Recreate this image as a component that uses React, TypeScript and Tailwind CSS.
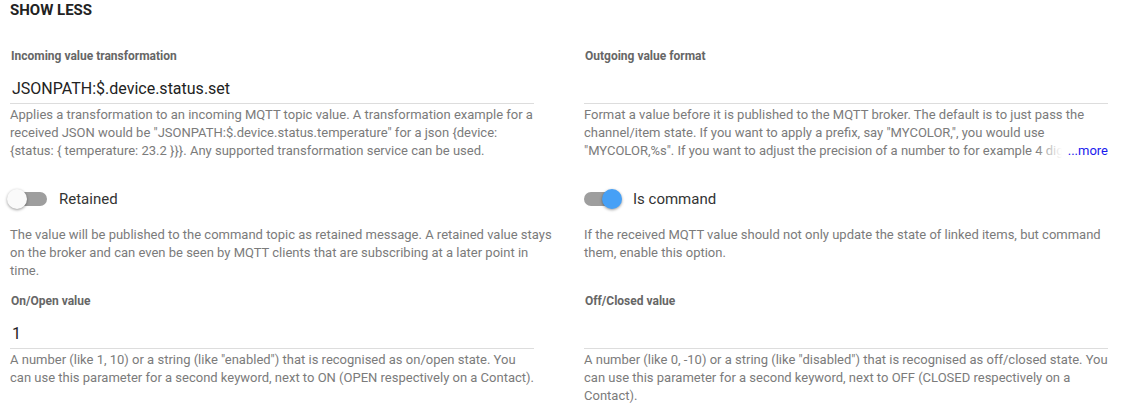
import { ReactNode } from "react";

const Label = ({ children }: { children: ReactNode }) => (
  <div className="text-[12px] leading-4 font-bold text-[#666] pl-px">{children}</div>
);

const Description = ({ children }: { children: ReactNode }) => (
  <p className="text-[13px] leading-[18px] text-[#7b7b7b]">{children}</p>
);

const TextField = ({
  label,
  value,
  children,
  clamp,
}: {
  label: string;
  value: string;
  children: ReactNode;
  clamp?: boolean;
}) => (
  <div className="w-[524px]">
    <Label>{label}</Label>
    <div className="mt-[10px] h-[30px] flex items-center pl-[2px] text-[16px] text-[#222] border-b border-[#ddd]">
      {value}
    </div>
    <div className="mt-[2px]">
      {clamp ? (
        <div className="relative h-[54px] overflow-hidden">
          <Description>{children}</Description>
          <div className="absolute right-0 bottom-0 flex h-[18px] items-center">
            <span className="w-[26px] h-full bg-gradient-to-r from-white/0 to-white" />
            <span className="bg-white pl-[6px] text-[13px] leading-[18px] text-[#1a1aee]">...more</span>
          </div>
        </div>
      ) : (
        <Description>{children}</Description>
      )}
    </div>
  </div>
);

const Toggle = ({ on, label, children }: { on: boolean; label: string; children: ReactNode }) => (
  <div>
    <div className="mt-[27px] h-6 flex items-center">
      <div className="relative w-[37px] h-[14px] rounded-full bg-[#9e9e9e]">
        <span
          className={`absolute top-[-3px] w-5 h-5 rounded-full shadow-[0_1px_3px_rgba(0,0,0,0.4)] ${
            on ? "right-[-1px] bg-[#46a0f6]" : "left-[-3px] bg-[#fafafa]"
          }`}
        />
      </div>
      <span className="ml-3 text-[15px] text-[#333]">{label}</span>
    </div>
    <div className="mt-[15px] w-[548px]">
      <Description>{children}</Description>
    </div>
  </div>
);

export default function App() {
  return (
    <div className="w-[1127px] h-[409px] overflow-hidden bg-white pl-[10px] font-['Roboto',sans-serif]">
      <div className="text-[15px] leading-5 font-bold text-[#222]">SHOW LESS</div>

      <div className="mt-[28px] grid grid-cols-[574px_1fr]">
        <TextField label="Incoming value transformation" value="JSONPATH:$.device.status.set">
          Applies a transformation to an incoming MQTT topic value. A transformation example for a
          received JSON would be "JSONPATH:$.device.status.temperature" for a json {"{device: {status: { temperature: 23.2 }}}"}. Any supported transformation service can be used.
        </TextField>
        <TextField label="Outgoing value format" value="" clamp>
          Format a value before it is published to the MQTT broker. The default is to just pass the
          channel/item state. If you want to apply a prefix, say "MYCOLOR,", you would use
          "MYCOLOR,%s". If you want to adjust the precision of a number to for example 4 digits, you
          would use "%.4f".
        </TextField>

        <Toggle on={false} label="Retained">
          The value will be published to the command topic as retained message. A retained value stays
          on the broker and can even be seen by MQTT clients that are subscribing at a later point in
          time.
        </Toggle>
        <Toggle on label="Is command">
          If the received MQTT value should not only update the state of linked items, but command
          them, enable this option.
        </Toggle>

        <div className="mt-[13px]">
          <TextField label="On/Open value" value="1">
            A number (like 1, 10) or a string (like "enabled") that is recognised as on/open state. You
            can use this parameter for a second keyword, next to ON (OPEN respectively on a Contact).
          </TextField>
        </div>
        <div className="mt-[13px]">
          <TextField label="Off/Closed value" value="">
            A number (like 0, -10) or a string (like "disabled") that is recognised as off/closed state.
            You can use this parameter for a second keyword, next to OFF (CLOSED respectively on a
            Contact).
          </TextField>
        </div>
      </div>
    </div>
  );
}
